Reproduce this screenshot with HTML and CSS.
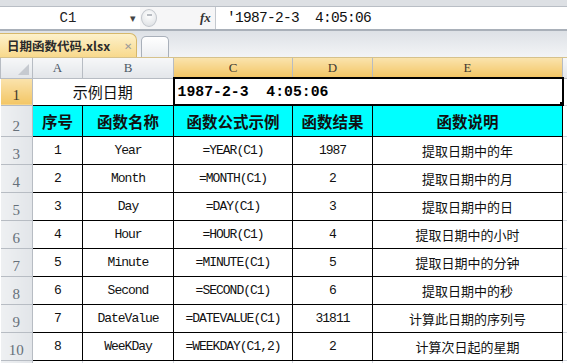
FILE: index.html
```html
<!DOCTYPE html>
<html lang="zh-CN">
<head>
    <meta charset="UTF-8">
    <meta name="viewport" content="width=device-width, initial-scale=1.0">
    <title>日期函数代码.xlsx</title>
    <link rel="stylesheet" href="styles.css">
</head>
<body>
    <div class="top-strip"></div>
    <div class="formula-bar">
        <div class="name-box">C1</div>
        <div class="name-arrow">&#9662;</div>
        <div class="fx-area">
            <span class="circle-btn"></span>
            <span class="fx">fx</span>
        </div>
        <div class="formula-input">'1987-2-3&nbsp;&nbsp;4:05:06</div>
    </div>
    <div class="tab-bar">
        <div class="tab active">日期函数代码.xlsx<span class="tab-close">&#10005;</span></div>
        <div class="tab new"></div>
    </div>
    <table class="sheet">
        <colgroup>
            <col class="c-row">
            <col class="c-a">
            <col class="c-b">
            <col class="c-c">
            <col class="c-d">
            <col class="c-e">
            <col class="c-f">
        </colgroup>
        <tr class="col-head">
            <th class="corner"><span class="corner-tri"></span></th>
            <th>A</th>
            <th>B</th>
            <th class="sel">C</th>
            <th class="sel">D</th>
            <th class="sel">E</th>
            <th></th>
        </tr>
        <tr class="r1">
            <th class="row-head sel">1</th>
            <td colspan="2" class="title">示例日期</td>
            <td colspan="3" class="date-cell">1987-2-3&nbsp;&nbsp;4:05:06<span class="fill-handle"></span></td>
            <td class="grid"></td>
        </tr>
        <tr class="r2">
            <th class="row-head">2</th>
            <td class="head">序号</td>
            <td class="head">函数名称</td>
            <td class="head">函数公式示例</td>
            <td class="head">函数结果</td>
            <td class="head">函数说明</td>
            <td class="grid"></td>
        </tr>
        <tr class="row">
            <th class="row-head">3</th>
            <td class="mono">1</td><td class="mono">Year</td><td class="mono">=YEAR(C1)</td><td class="mono">1987</td><td class="cn">提取日期中的年</td>
            <td class="grid"></td>
        </tr>
        <tr class="row">
            <th class="row-head">4</th>
            <td class="mono">2</td><td class="mono">Month</td><td class="mono">=MONTH(C1)</td><td class="mono">2</td><td class="cn">提取日期中的月</td>
            <td class="grid"></td>
        </tr>
        <tr class="row">
            <th class="row-head">5</th>
            <td class="mono">3</td><td class="mono">Day</td><td class="mono">=DAY(C1)</td><td class="mono">3</td><td class="cn">提取日期中的日</td>
            <td class="grid"></td>
        </tr>
        <tr class="row">
            <th class="row-head">6</th>
            <td class="mono">4</td><td class="mono">Hour</td><td class="mono">=HOUR(C1)</td><td class="mono">4</td><td class="cn">提取日期中的小时</td>
            <td class="grid"></td>
        </tr>
        <tr class="row">
            <th class="row-head">7</th>
            <td class="mono">5</td><td class="mono">Minute</td><td class="mono">=MINUTE(C1)</td><td class="mono">5</td><td class="cn">提取日期中的分钟</td>
            <td class="grid"></td>
        </tr>
        <tr class="row">
            <th class="row-head">8</th>
            <td class="mono">6</td><td class="mono">Second</td><td class="mono">=SECOND(C1)</td><td class="mono">6</td><td class="cn">提取日期中的秒</td>
            <td class="grid"></td>
        </tr>
        <tr class="row">
            <th class="row-head">9</th>
            <td class="mono">7</td><td class="mono">DateValue</td><td class="mono">=DATEVALUE(C1)</td><td class="mono">31811</td><td class="cn">计算此日期的序列号</td>
            <td class="grid"></td>
        </tr>
        <tr class="row">
            <th class="row-head">10</th>
            <td class="mono">8</td><td class="mono">WeeKDay</td><td class="mono">=WEEKDAY(C1,2)</td><td class="mono">2</td><td class="cn">计算次日起的星期</td>
            <td class="grid"></td>
        </tr>
        <tr class="row-empty">
            <th class="row-head"></th>
            <td class="grid"></td><td class="grid"></td><td class="grid"></td><td class="grid"></td><td class="grid"></td><td class="grid"></td>
        </tr>
    </table>
</body>
</html>
```
FILE: styles.css
```css
body {
    margin: 0;
    padding: 0;
    width: 567px;
    height: 363px;
    overflow: hidden;
    background-color: #ffffff;
    font-family: "Liberation Serif", "Noto Sans CJK SC", serif;
}
.top-strip {
    height: 6px;
    background-color: #dde0e4;
    border-bottom: 1px solid #b9bec5;
}
.formula-bar {
    display: flex;
    height: 22px;
    background-color: #ffffff;
    border-bottom: 2px solid #a9b0b9;
}
.name-box {
    width: 124px;
    text-align: center;
    padding-left: 6px;
    font-family: "Liberation Mono", monospace;
    font-size: 14px;
    line-height: 22px;
    color: #222;
}
.name-arrow {
    width: 10px;
    font-size: 11px;
    line-height: 22px;
    color: #444;
}
.fx-area {
    display: flex;
    align-items: center;
    width: 76px;
    background-color: #f6f6f7;
    border-right: 1px solid #c4c8ce;
    box-sizing: border-box;
}
.circle-btn {
    width: 14px;
    height: 16px;
    margin-left: 1px;
    border: 1px solid #c2c6cc;
    border-radius: 50%;
    background: radial-gradient(circle at 50% 35%, #ffffff, #d9dce0);
    position: relative;
}
.circle-btn::after {
    content: "";
    position: absolute;
    left: 5px;
    top: 4px;
    width: 5px;
    height: 2px;
    background-color: #b8bcc2;
}
.fx {
    margin-left: 43px;
    font-family: "Liberation Serif", serif;
    font-style: italic;
    font-weight: bold;
    font-size: 13px;
    color: #333;
}
.formula-input {
    flex: 1;
    padding-left: 11px;
    font-family: "Liberation Mono", monospace;
    font-size: 14.5px;
    letter-spacing: -0.7px;
    line-height: 22px;
    color: #111;
    white-space: nowrap;
}
.tab-bar {
    display: flex;
    align-items: flex-end;
    gap: 4px;
    height: 26px;
    background: linear-gradient(#dde1e6, #f3f4f6);
    border-bottom: 1px solid #d6c28c;
}
.tab {
    box-sizing: border-box;
    border-radius: 0 7px 0 0;
}
.tab.active {
    display: flex;
    align-items: center;
    width: 137px;
    height: 24px;
    padding-left: 7px;
    background: linear-gradient(#fdf1cb, #f8d98c);
    border: 1px solid #d6b86a;
    border-left: none;
    border-bottom: none;
    font-family: "Noto Sans CJK SC", sans-serif;
    font-weight: bold;
    font-size: 12.5px;
    color: #2b2b2b;
}
.tab-close {
    margin-left: 14px;
    font-size: 10px;
    color: #9a9a9a;
    font-weight: normal;
}
.tab.new {
    width: 28px;
    height: 21px;
    background: linear-gradient(#ffffff, #eceef1);
    border: 1px solid #a9b0ba;
    border-bottom: none;
    border-radius: 5px 5px 0 0;
}
.sheet {
    border-collapse: collapse;
    table-layout: fixed;
    width: 567px;
}
.c-row { width: 32px; }
.c-a { width: 50px; }
.c-b { width: 91px; }
.c-c { width: 119px; }
.c-d { width: 80px; }
.c-e { width: 190px; }
.c-f { width: 5px; }
.sheet th,
.sheet td {
    padding: 0;
    overflow: hidden;
    white-space: nowrap;
}
.col-head th {
    height: 19px;
    background: linear-gradient(#f6f7f8, #e3e6ea);
    border: 1px solid #b7bcc3;
    border-top: none;
    font-family: "Liberation Serif", serif;
    font-weight: normal;
    font-size: 13px;
    color: #4b5866;
    line-height: 19px;
}
.col-head th.sel,
.row-head.sel {
    background: linear-gradient(#fae3ad, #f3c665);
    color: #3e3a30;
}
.corner {
    position: relative;
}
.corner-tri {
    position: absolute;
    right: 3px;
    bottom: 3px;
    width: 0;
    height: 0;
    border-left: 11px solid transparent;
    border-bottom: 11px solid #c6cad0;
}
.row-head {
    background: linear-gradient(90deg, #eef0f2, #e2e5e9);
    border: 1px solid #b7bcc3;
    border-left: none;
    font-family: "Liberation Serif", serif;
    font-weight: normal;
    font-size: 15px;
    color: #66707a;
    vertical-align: bottom;
    padding-bottom: 1px !important;
}
.r1 { height: 27px; }
.r2 { height: 30px; }
.row { height: 28px; }
.row-empty { height: 8px; }
.grid {
    border: 1px solid #d4d8df;
}
.title {
    text-align: center;
    font-family: "Noto Sans CJK SC", sans-serif;
    font-size: 15px;
    color: #111;
    border-right: 1px solid #d4d8df;
}
.date-cell {
    position: relative;
    border: 2px solid #000000;
    padding-left: 3px !important;
    font-family: "Liberation Mono", monospace;
    font-weight: bold;
    font-size: 14.8px;
    color: #000;
}
.fill-handle {
    position: absolute;
    right: -4px;
    bottom: -4px;
    width: 5px;
    height: 5px;
    background-color: #000;
    border: 1px solid #fff;
}
.head {
    height: 30px;
    background-color: #00ffff;
    border: 1px solid #000;
    text-align: center;
    font-family: "Noto Sans CJK SC", sans-serif;
    font-weight: bold;
    font-size: 15.5px;
    color: #111;
}
.mono {
    border: 1px solid #000;
    text-align: center;
    font-family: "Liberation Mono", monospace;
    font-size: 13px;
    letter-spacing: -1px;
    color: #111;
}
.cn {
    border: 1px solid #000;
    text-align: center;
    font-family: "Noto Sans CJK SC", sans-serif;
    font-size: 13px;
    color: #111;
}
```
